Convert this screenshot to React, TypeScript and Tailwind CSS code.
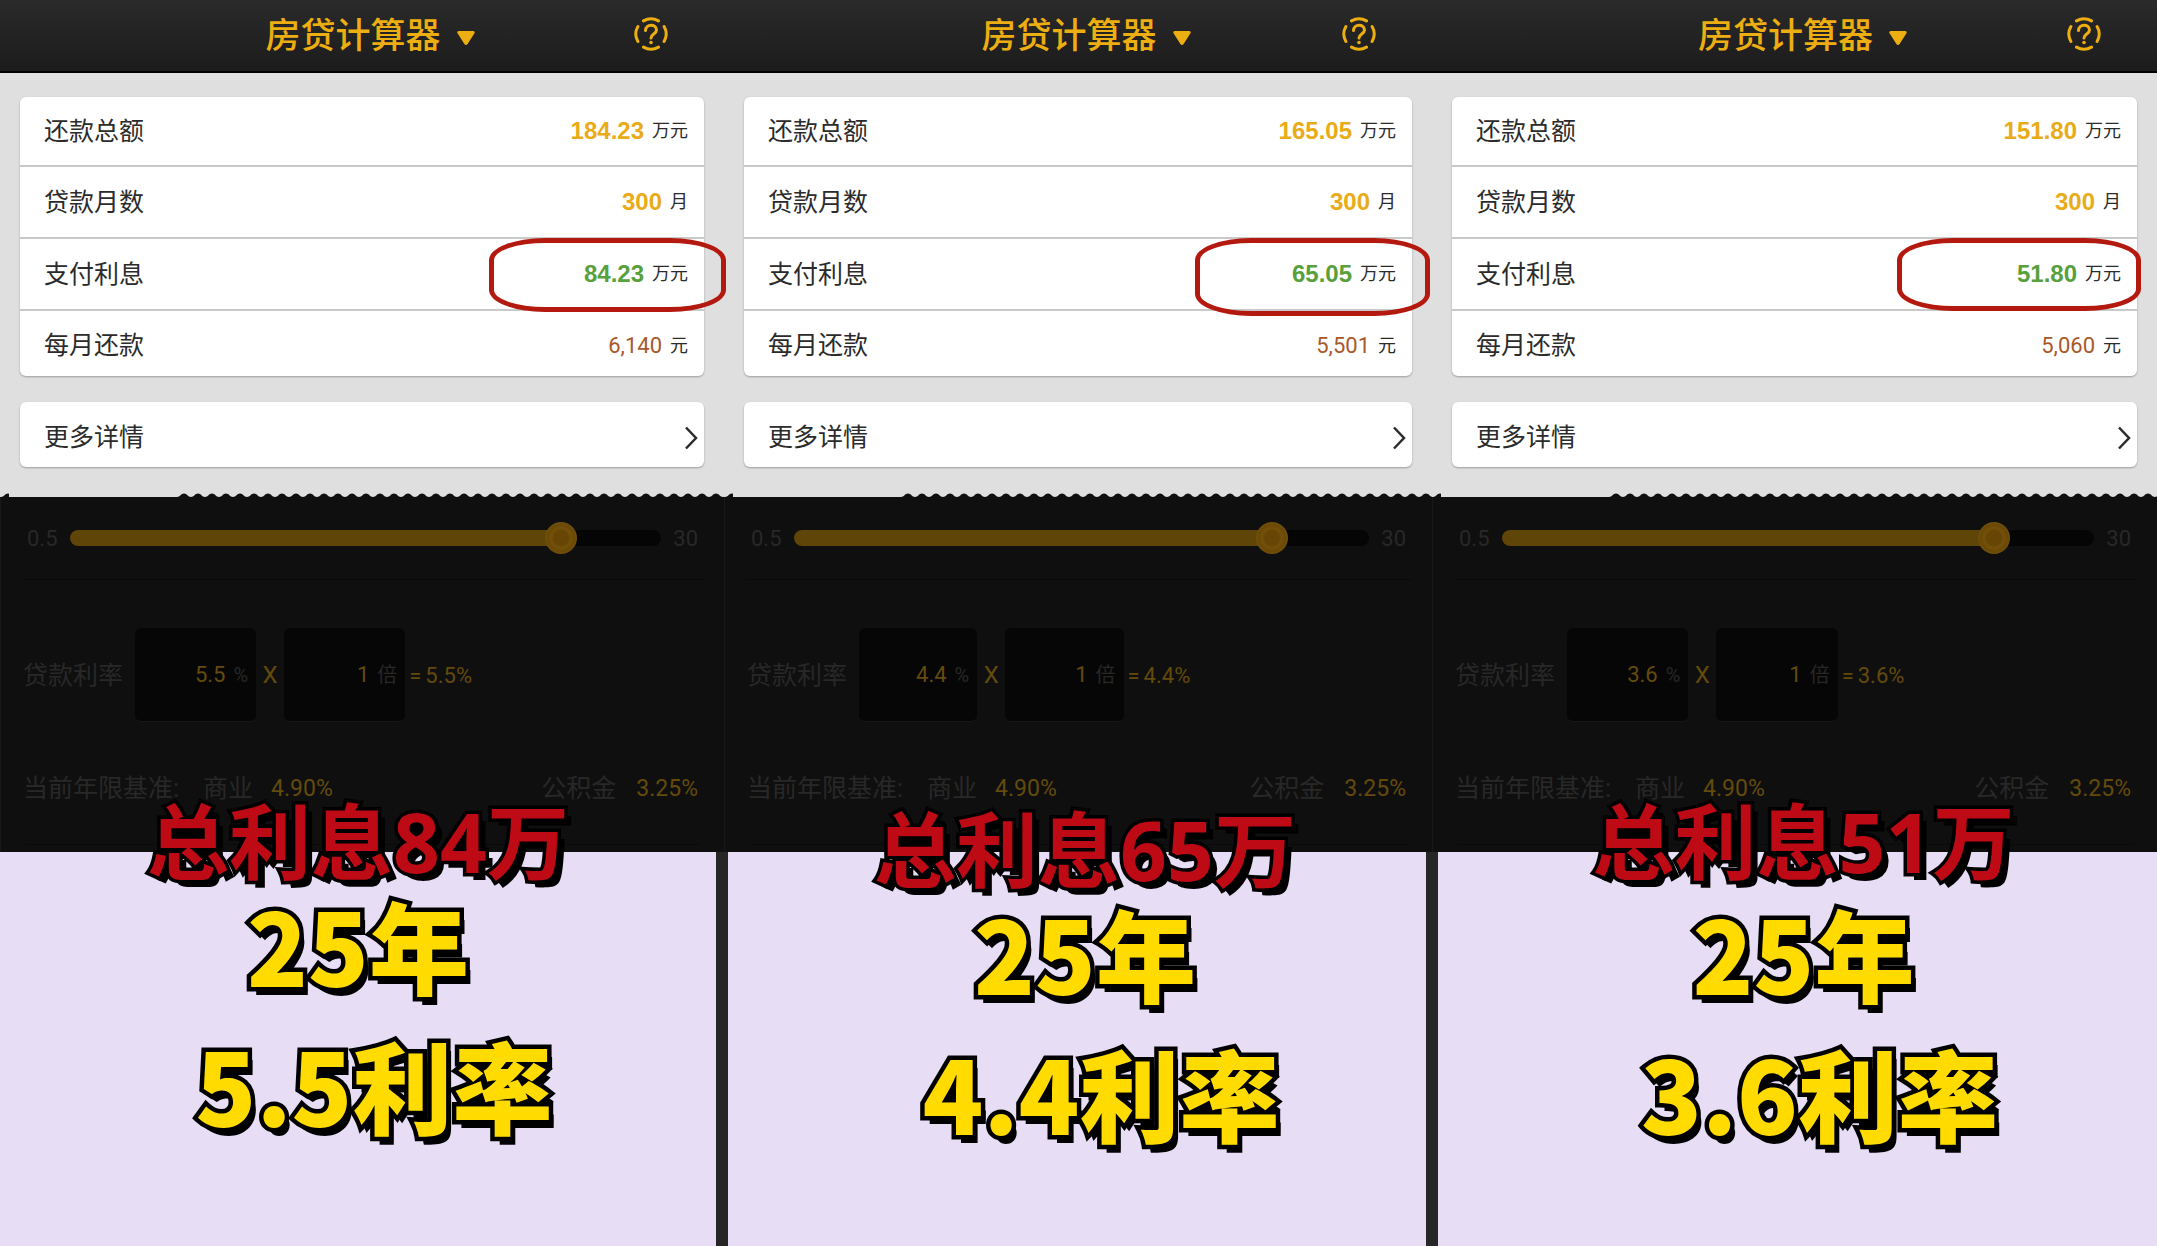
import { useId, useState } from "react";
import clsx from "clsx";

interface Plan {
  id: string;
  total: string;
  months: string;
  interest: string;
  monthly: string;
  rate: string;
  ringClass: string;
  captionClass: string;
  captions: [string, string, string];
}

const PLANS: Plan[] = [
  {
    id: "rate-55",
    total: "184.23",
    months: "300",
    interest: "84.23",
    monthly: "6,140",
    rate: "5.5",
    ringClass: "-right-[22px] h-[74px] w-[237px]",
    captionClass: "-mt-[52px] gap-3",
    captions: ["总利息84万", "25年", "5.5利率"],
  },
  {
    id: "rate-44",
    total: "165.05",
    months: "300",
    interest: "65.05",
    monthly: "5,501",
    rate: "4.4",
    ringClass: "-right-[18px] h-[78px] w-[235px]",
    captionClass: "-mt-11 gap-3 pl-4",
    captions: ["总利息65万", "25年", "4.4利率"],
  },
  {
    id: "rate-36",
    total: "151.80",
    months: "300",
    interest: "51.80",
    monthly: "5,060",
    rate: "3.6",
    ringClass: "-right-1 h-[73px] w-[244px]",
    captionClass: "-mt-[52px] gap-5 pl-3",
    captions: ["总利息51万", "25年", "3.6利率"],
  },
];

export default function App() {
  return (
    <main className="flex min-h-screen flex-col bg-[#262626] font-['Liberation_Sans','Noto_Sans_CJK_SC',sans-serif]">
      <div className="grid grid-cols-[724fr_708fr_725fr]">
        {PLANS.map((plan) => (
          <Calculator key={plan.id} plan={plan} />
        ))}
      </div>
      <div className="grid flex-1 grid-cols-[716fr_698fr_719fr] gap-3">
        {PLANS.map((plan) => (
          <Captions key={plan.id} plan={plan} />
        ))}
      </div>
    </main>
  );
}

function Calculator({ plan }: { plan: Plan }) {
  return (
    <section className="flex flex-col">
      <header className="grid h-[73px] grid-cols-[1fr_auto_1fr] items-center border-b-2 border-black bg-linear-to-b from-[#2a2a2a] to-[#1c1c1c] pl-4 text-[#edae12]">
        <span />
        <button type="button" className="flex items-center gap-4">
          <h1 className="text-[35px] leading-none font-medium">房贷计算器</h1>
          <svg viewBox="0 0 18 16" className="mt-1 h-4 w-[18px]" aria-hidden>
            <path
              d="M2 1h14c1.600 0 2.200 1.400 1.300 2.600L10.600 14c-.8 1.300-2.400 1.300-3.200 0L.7 3.600C-.2 2.400.4 1 2 1z"
              fill="currentColor"
            />
          </svg>
        </button>
        <button
          type="button"
          aria-label="帮助"
          className="mr-14 mb-1 justify-self-end"
        >
          <HelpIcon />
        </button>
      </header>

      <div className="flex flex-col gap-[26px] bg-[#dfdfdf] px-5 pt-6 pb-[30px] text-[#2b2b2b]">
        <dl className="rounded-md bg-white shadow-[0_1px_2px_#0000004d]">
          <ResultRow
            label="还款总额"
            value={plan.total}
            unit="万元"
            rowClass="h-[70px]"
            valueClass="text-2xl font-bold text-[#e9ab17]"
          />
          <ResultRow
            label="贷款月数"
            value={plan.months}
            unit="月"
            rowClass="h-[72px]"
            valueClass="text-2xl font-bold text-[#e9ab17]"
          />
          <ResultRow
            label="支付利息"
            value={plan.interest}
            unit="万元"
            rowClass="h-[72px]"
            valueClass="text-2xl font-bold text-[#58a03c]"
            ringClass={plan.ringClass}
          />
          <ResultRow
            label="每月还款"
            value={plan.monthly}
            unit="元"
            rowClass="h-[65px] pt-1"
            valueClass="font-['Roboto',sans-serif] text-[22px] text-[#a9582a]"
            last
          />
        </dl>
        <button
          type="button"
          className="flex h-[65px] items-center justify-between rounded-md bg-white pt-1.5 pr-[6px] pl-6 shadow-[0_1px_2px_#0000004d]"
        >
          <span className="text-[25px] leading-none">更多详情</span>
          <svg viewBox="0 0 14 24" className="h-6 w-[14px]" aria-hidden>
            <path
              d="M2 1.500 12 12 2 22.500"
              fill="none"
              stroke="currentColor"
              strokeWidth="2.500"
            />
          </svg>
        </button>
      </div>

      <RatePanel plan={plan} />
    </section>
  );
}

interface ResultRowProps {
  label: string;
  value: string;
  unit: string;
  rowClass: string;
  valueClass: string;
  ringClass?: string;
  last?: boolean;
}

function ResultRow({
  label,
  value,
  unit,
  rowClass,
  valueClass,
  ringClass,
  last = false,
}: ResultRowProps) {
  return (
    <div
      className={clsx(
        "relative flex items-center justify-between pr-4 pl-6",
        !last && "border-b-2 border-[#c9c9c9]",
        rowClass
      )}
    >
      <dt className="text-[25px] leading-none">{label}</dt>
      <dd className="flex items-center gap-2">
        <span className={clsx("leading-none", valueClass)}>{value}</span>
        <span className="text-lg leading-none">{unit}</span>
      </dd>
      {ringClass && (
        <span
          aria-hidden
          className={clsx(
            "absolute -top-px z-10 rounded-[56px/22px] border-[5px] border-[#b3190f]",
            ringClass
          )}
        />
      )}
    </div>
  );
}

function RatePanel({ plan }: { plan: Plan }) {
  const [years, setYears] = useState(25);
  const fill = ((years - 0.5) / 29.5) * 100;

  return (
    <div className="relative border-l border-[#181818] bg-[#0f0f0f] font-['Roboto','Noto_Sans_CJK_SC',sans-serif] text-[#282828]">
      <TornEdge className="left-0 w-2" />
      <TornEdge className="right-0 left-44" />

      <div className="flex h-[82px] items-center gap-3 px-[26px] text-[22px]">
        <span>0.5</span>
        <div className="relative h-4 flex-1 rounded-full bg-[#050505]">
          <div
            className="h-4 rounded-full bg-[#5f4507]"
            style={{ width: `${fill}%` }}
          />
          <input
            type="range"
            aria-label="贷款年限"
            min={0.5}
            max={30}
            step={0.5}
            value={years}
            onChange={(e) => setYears(Number(e.target.value))}
            className="absolute -inset-x-4 -top-2 h-8 cursor-pointer appearance-none bg-transparent [&::-webkit-slider-thumb]:size-8 [&::-webkit-slider-thumb]:appearance-none [&::-webkit-slider-thumb]:rounded-full [&::-webkit-slider-thumb]:bg-[radial-gradient(circle,#664505_0_7px,#75520a_10px,#6a4805_13px,#70500c_16px)]"
          />
        </div>
        <span>30</span>
      </div>

      <div className="mx-5 h-px bg-[#0a0a0a]" />

      <div className="flex items-center pt-12 pr-7 pl-[22px] text-[22px] text-[#644b0c]">
        <label
          htmlFor={`${plan.id}-rate`}
          className="mr-3 text-[25px] leading-none text-[#282828]"
        >
          贷款利率
        </label>
        <RateBox id={`${plan.id}-rate`} value={plan.rate} unit="%" />
        <span className="w-7 text-center text-2xl">X</span>
        <RateBox id={`${plan.id}-times`} label="倍数" value="1" unit="倍" />
        <span className="ml-1">=</span>
        <output className="ml-1">{plan.rate}%</output>
      </div>

      <div className="mt-[46px] flex h-10 items-center justify-between pr-[26px] pl-[22px] text-[25px] leading-none">
        <div className="flex items-center">
          <span>当前年限基准:</span>
          <span className="ml-6">商业</span>
          <span className="ml-[18px] text-[23px] text-[#644b0c]">4.90%</span>
        </div>
        <div className="flex items-center gap-5">
          <span>公积金</span>
          <span className="text-[23px] text-[#644b0c]">3.25%</span>
        </div>
      </div>

      <div className="mx-6 mt-9 mb-[7px] h-px bg-[#0a0a0a]" />
    </div>
  );
}

function RateBox({
  id,
  value,
  unit,
  label,
}: {
  id: string;
  value: string;
  unit: string;
  label?: string;
}) {
  return (
    <div className="flex h-[94px] w-[18%] items-center gap-2 rounded-md border-b border-[#161616] bg-[#060606] pr-2">
      <input
        id={id}
        aria-label={label}
        defaultValue={value}
        className="w-0 flex-1 bg-transparent text-right outline-none"
      />
      <span className="text-xl leading-none text-[#282828]">{unit}</span>
    </div>
  );
}

function Captions({ plan }: { plan: Plan }) {
  const [interest, term, rate] = plan.captions;

  return (
    <div className="bg-[#e7def6]">
      <div
        className={clsx(
          "relative z-10 flex flex-col text-center leading-none whitespace-nowrap [paint-order:stroke_fill]",
          plan.captionClass
        )}
      >
        <p className="font-['Open_Sans','Noto_Sans_CJK_SC',sans-serif] text-[82px] leading-none font-bold text-[#bd0a14] [-webkit-text-stroke:7px_#000] [text-shadow:7px_7px_0_#000]">
          {interest}
        </p>
        <div className="flex flex-col gap-10 font-['Noto_Sans_CJK_SC',sans-serif] text-[100px] leading-none font-black text-[#ffdb00] [-webkit-text-stroke:9px_#000] [text-shadow:5px_8px_0_#000]">
          <p>{term}</p>
          <p className="pl-8">{rate}</p>
        </div>
      </div>
    </div>
  );
}

// row of small rounded teeth sitting on the top edge of the dark panel
function TornEdge({ className }: { className: string }) {
  const id = useId();
  return (
    <div className={clsx("absolute -top-1 h-[5px]", className)}>
      <svg className="h-full w-full" aria-hidden>
        <pattern id={id} width="14" height="5" patternUnits="userSpaceOnUse">
          <path d="M0 5V4C3 4 4 .5 7 .5s4 3.500 7 3.500V5z" fill="#0f0f0f" />
        </pattern>
        <rect width="100%" height="5" fill={`url(#${id})`} />
      </svg>
    </div>
  );
}

function HelpIcon() {
  return (
    <svg
      viewBox="0 0 34 34"
      className="size-[34px]"
      fill="none"
      stroke="currentColor"
      strokeWidth="3"
      strokeLinecap="round"
      aria-hidden
    >
      <path d="M9.500 3.900a15 15 0 0 1 15 0M9.500 30.100a15 15 0 0 0 15 0M3.900 9.500a15 15 0 0 0 0 15M30.100 9.500a15 15 0 0 1 0 15" />
      <path d="M11.500 13.500c0-7 11-7 11-.5 0 4-5.500 4-5.500 8" />
      <circle cx="17" cy="25.500" r="1.800" fill="currentColor" stroke="none" />
    </svg>
  );
}
